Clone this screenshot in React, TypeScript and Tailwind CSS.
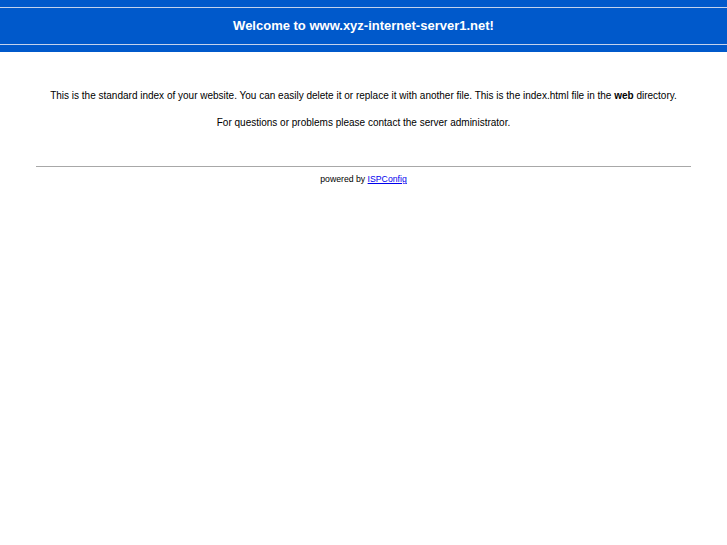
export default function App() {
  return (
    <div className="min-h-[545px] bg-white font-['Liberation_Sans',Arial,sans-serif] text-black">
      <div className="flex h-[52px] flex-col justify-center bg-[#0059cb]">
        <div className="h-px bg-[#c4d2ec]" />
        <div className="flex h-[36px] items-center justify-center text-[13px] font-bold text-white">
          Welcome to www.xyz-internet-server1.net!
        </div>
        <div className="h-px bg-[#c4d2ec]" />
      </div>
      <div className="pt-[37px] text-center text-[10px] leading-[13px]">
        <p>
          This is the standard index of your website. You can easily delete it or replace it with another file. This is
          the index.html file in the <b>web</b> directory.
        </p>
        <p className="mt-[14px]">For questions or problems please contact the server administrator.</p>
      </div>
      <div className="mx-auto mt-[37px] h-[2px] w-[90%] border-t border-[#a8a8a8] border-b-[#e8e8e8]" />
      <div className="mt-[6px] text-center text-[8.7px] leading-[11px]">
        powered by{' '}
        <a href="#" className="text-[#0000ee] underline">
          ISPConfig
        </a>
      </div>
    </div>
  );
}
